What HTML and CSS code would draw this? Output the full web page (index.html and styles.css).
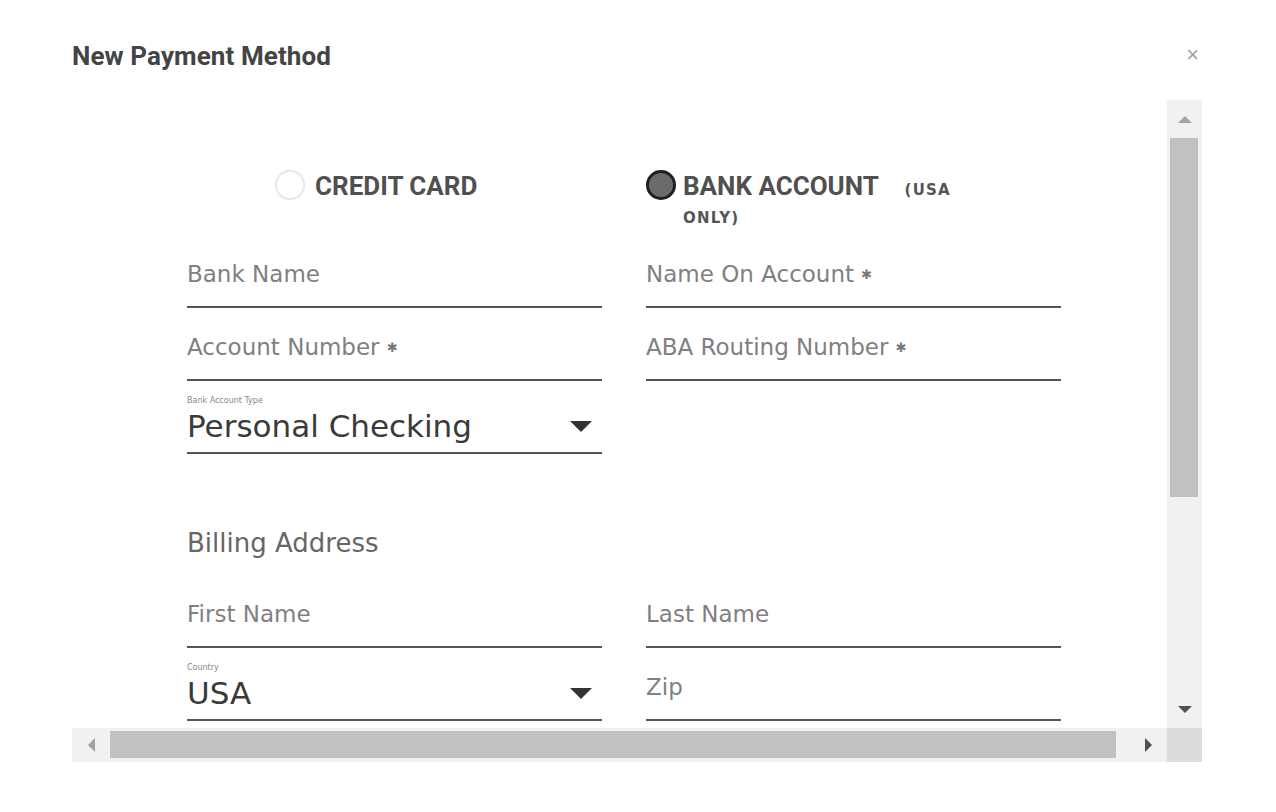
FILE: index.html
```html
<!DOCTYPE html>
<html lang="en">
<head>
    <meta charset="UTF-8">
    <meta name="viewport" content="width=device-width, initial-scale=1.0">
    <title>New Payment Method</title>
    <link rel="stylesheet" href="styles.css">
</head>
<body>
    <div class="dialog">
        <div class="dialog-header">
            <h2 class="dialog-title">New Payment Method</h2>
            <span class="dialog-close">&times;</span>
        </div>

        <div class="scroll-frame">
            <div class="viewport">
                <div class="payment-form">
                    <div class="payment-types">
                        <div class="payment-type credit">
                            <span class="radio"></span>
                            <span class="type-name">CREDIT CARD</span>
                        </div>
                        <div class="payment-type bank">
                            <span class="radio checked"></span>
                            <span class="type-name"><span>BANK ACCOUNT</span> <small class="type-note"><span>(USA</span> <span>ONLY)</span></small></span>
                        </div>
                    </div>

                    <div class="fields">
                        <div class="field"><span class="field-label">Bank Name</span></div>
                        <div class="field"><span class="field-label">Name On Account <span class="req">&#10033;</span></span></div>
                        <div class="field"><span class="field-label">Account Number <span class="req">&#10033;</span></span></div>
                        <div class="field"><span class="field-label">ABA Routing Number <span class="req">&#10033;</span></span></div>
                        <div class="field select">
                            <span class="select-label">Bank Account Type</span>
                            <div class="select-value">
                                <span>Personal Checking</span>
                                <span class="caret"></span>
                            </div>
                        </div>
                        <div class="field empty"></div>

                        <h3 class="section-title">Billing Address</h3>

                        <div class="field"><span class="field-label">First Name</span></div>
                        <div class="field"><span class="field-label">Last Name</span></div>
                        <div class="field select">
                            <span class="select-label">Country</span>
                            <div class="select-value">
                                <span>USA</span>
                                <span class="caret"></span>
                            </div>
                        </div>
                        <div class="field"><span class="field-label">Zip</span></div>
                    </div>
                </div>
            </div>

            <div class="vbar">
                <div class="bar-btn"><span class="arrow up"></span></div>
                <div class="vthumb"></div>
                <div class="bar-space"></div>
                <div class="bar-btn"><span class="arrow down"></span></div>
            </div>
            <div class="hbar">
                <div class="bar-btn"><span class="arrow left"></span></div>
                <div class="hthumb"></div>
                <div class="bar-space"></div>
                <div class="bar-btn"><span class="arrow right"></span></div>
            </div>
            <div class="corner"></div>
        </div>
    </div>
</body>
</html>
```

FILE: styles.css
```css
body {
    margin: 0;
    background: #ffffff;
    font-family: "DejaVu Sans", sans-serif;
}

.dialog {
    width: 1130px;
    margin-left: 72px;
}

.dialog-header {
    display: flex;
    justify-content: space-between;
    height: 100px;
}

.dialog-title {
    margin: 0;
    padding-top: 41px;
    font-family: Roboto, "Liberation Sans", sans-serif;
    font-size: 26px;
    line-height: 30px;
    letter-spacing: 0.1px;
    font-weight: 700;
    color: #444444;
}

.dialog-close {
    margin-top: 42px;
    margin-right: 3px;
    font-family: "Liberation Sans", sans-serif;
    font-size: 22px;
    line-height: 26px;
    color: #a0a0a0;
}

/* scroll area with its own bars */
.scroll-frame {
    display: grid;
    grid-template-columns: 1095px 35px;
    grid-template-rows: 628px 34px;
}

.viewport {
    overflow: hidden;
}

.payment-form {
    width: 1120px;
    padding-left: 115px;
    box-sizing: border-box;
}

.payment-types {
    display: grid;
    grid-template-columns: 415px 415px;
    column-gap: 44px;
    height: 135px;
    padding-top: 70px;
    box-sizing: border-box;
}

.payment-type {
    display: flex;
    align-items: flex-start;
}

.payment-type.credit {
    padding-left: 88px;
}

.radio {
    flex: none;
    width: 30px;
    height: 30px;
    border-radius: 50%;
    border: 2px solid #e8e8e8;
    box-sizing: border-box;
    background: #ffffff;
    box-shadow: 0 0 2px rgba(0, 0, 0, 0.08);
}

.radio.checked {
    border: 3px solid #1f1f1f;
    background: #6b6b6b;
}

.type-name {
    margin-left: 10px;
    margin-top: 2px;
    font-family: Roboto, "Liberation Sans", sans-serif;
    font-size: 26px;
    line-height: 28px;
    font-weight: 700;
    color: #505050;
}

.bank .type-name {
    margin-left: 7px;
    max-width: 300px;
}

.type-note {
    margin-left: 20px;
    font-family: "DejaVu Sans", sans-serif;
    font-size: 15px;
    line-height: 20px;
    letter-spacing: 1.2px;
    font-weight: 700;
    color: #555555;
}

.fields {
    display: grid;
    grid-template-columns: 415px 415px;
    column-gap: 44px;
}

.field {
    height: 73px;
    padding-top: 26px;
    box-sizing: border-box;
    border-bottom: 2px solid #555555;
}

.field.empty {
    border-bottom: none;
}

.field-label {
    font-size: 23px;
    line-height: 26px;
    color: #808080;
}

.req {
    font-size: 13px;
    vertical-align: 3px;
    color: #777777;
}

.field.select {
    padding-top: 15px;
}

.select-label {
    display: block;
    margin-bottom: 4px;
    font-size: 8px;
    line-height: 10px;
    color: #888888;
}

.select-value {
    display: flex;
    justify-content: space-between;
    align-items: center;
    padding-right: 10px;
    font-size: 31px;
    line-height: 32px;
    color: #3a3a3a;
}

.caret {
    width: 0;
    height: 0;
    border-left: 11px solid transparent;
    border-right: 11px solid transparent;
    border-top: 11px solid #333333;
}

.section-title {
    grid-column: 1 / -1;
    margin: 0;
    height: 121px;
    padding-top: 74px;
    box-sizing: border-box;
    font-size: 26px;
    line-height: 30px;
    font-weight: 400;
    color: #666666;
}

.vbar {
    display: flex;
    flex-direction: column;
    background: #f1f1f1;
}

.hbar {
    display: flex;
    background: #f1f1f1;
}

.bar-btn {
    flex: none;
    width: 35px;
    height: 38px;
    display: flex;
    align-items: center;
    justify-content: center;
}

.hbar .bar-btn {
    width: 38px;
    height: 34px;
}

.hbar .bar-btn:last-child {
    width: 37px;
}

.bar-space {
    flex: 1;
}

.vthumb {
    height: 359px;
    margin: 0 4px 0 3px;
    background: #c1c1c1;
}

.hthumb {
    width: 1006px;
    margin: 3px 0 4px;
    background: #c1c1c1;
}

.arrow {
    width: 0;
    height: 0;
}

.arrow.up {
    border-left: 7px solid transparent;
    border-right: 7px solid transparent;
    border-bottom: 7px solid #a3a3a3;
}

.arrow.down {
    border-left: 7px solid transparent;
    border-right: 7px solid transparent;
    border-top: 7px solid #505050;
}

.arrow.left {
    border-top: 7px solid transparent;
    border-bottom: 7px solid transparent;
    border-right: 7px solid #a3a3a3;
}

.arrow.right {
    border-top: 7px solid transparent;
    border-bottom: 7px solid transparent;
    border-left: 7px solid #505050;
}

.corner {
    background: #dcdcdc;
}
```
